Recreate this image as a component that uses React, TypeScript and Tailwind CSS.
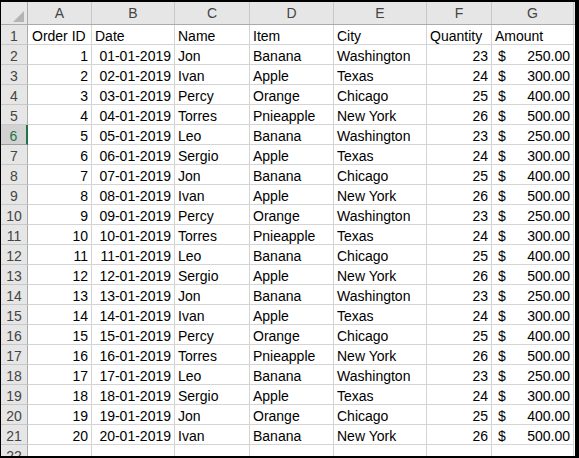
import React from 'react';

const cols = [
  { key: 'A', w: 'w-[64px]' },
  { key: 'B', w: 'w-[83px]' },
  { key: 'C', w: 'w-[75px]' },
  { key: 'D', w: 'w-[84px]' },
  { key: 'E', w: 'w-[93px]' },
  { key: 'F', w: 'w-[65px]' },
  { key: 'G', w: 'w-[82px]' },
];

const rows: [number, string, string, string, string, number, string][] = [
  [1, '01-01-2019', 'Jon', 'Banana', 'Washington', 23, '250.00'],
  [2, '02-01-2019', 'Ivan', 'Apple', 'Texas', 24, '300.00'],
  [3, '03-01-2019', 'Percy', 'Orange', 'Chicago', 25, '400.00'],
  [4, '04-01-2019', 'Torres', 'Pnieapple', 'New York', 26, '500.00'],
  [5, '05-01-2019', 'Leo', 'Banana', 'Washington', 23, '250.00'],
  [6, '06-01-2019', 'Sergio', 'Apple', 'Texas', 24, '300.00'],
  [7, '07-01-2019', 'Jon', 'Banana', 'Chicago', 25, '400.00'],
  [8, '08-01-2019', 'Ivan', 'Apple', 'New York', 26, '500.00'],
  [9, '09-01-2019', 'Percy', 'Orange', 'Washington', 23, '250.00'],
  [10, '10-01-2019', 'Torres', 'Pnieapple', 'Texas', 24, '300.00'],
  [11, '11-01-2019', 'Leo', 'Banana', 'Chicago', 25, '400.00'],
  [12, '12-01-2019', 'Sergio', 'Apple', 'New York', 26, '500.00'],
  [13, '13-01-2019', 'Jon', 'Banana', 'Washington', 23, '250.00'],
  [14, '14-01-2019', 'Ivan', 'Apple', 'Texas', 24, '300.00'],
  [15, '15-01-2019', 'Percy', 'Orange', 'Chicago', 25, '400.00'],
  [16, '16-01-2019', 'Torres', 'Pnieapple', 'New York', 26, '500.00'],
  [17, '17-01-2019', 'Leo', 'Banana', 'Washington', 23, '250.00'],
  [18, '18-01-2019', 'Sergio', 'Apple', 'Texas', 24, '300.00'],
  [19, '19-01-2019', 'Jon', 'Orange', 'Chicago', 25, '400.00'],
  [20, '20-01-2019', 'Ivan', 'Banana', 'New York', 26, '500.00'],
];

const cell = 'h-full shrink-0 border-r border-b border-[#d4d4d4] flex items-end pb-[1px] overflow-hidden whitespace-nowrap';

function RowHeader({ n, active }: { n: number; active?: boolean }) {
  return (
    <div
      className={
        'w-[27px] h-full shrink-0 flex items-end justify-center pb-[1px] border-b ' +
        (active
          ? 'bg-[#d2d2d2] text-[#217346] border-b-[#9f9f9f] border-r-2 border-r-[#217346]'
          : 'bg-[#e6e6e6] text-[#444] border-b-[#c8c8c8] border-r border-r-[#ababab]')
      }
    >
      {n}
    </div>
  );
}

export default function App() {
  return (
    <div className="w-[579px] h-[458px] bg-black pt-[2px] pl-[1px] pr-[4px] pb-[2px] overflow-hidden">
      <div
        className="w-full h-full bg-white overflow-hidden text-[14px] leading-none text-black"
        style={{ fontFamily: '"Liberation Sans", Arial, sans-serif' }}
      >
        {/* column headers */}
        <div className="flex h-[23px] bg-[#e6e6e6] border-b border-[#ababab]">
          <div className="w-[27px] h-full shrink-0 border-r border-[#ababab] relative">
            <svg width="11" height="11" className="absolute right-[3px] bottom-[2px]">
              <polygon points="11,0 11,11 0,11" fill="#b4b4b4" />
            </svg>
          </div>
          {cols.map((c) => (
            <div
              key={c.key}
              className={`${c.w} h-full shrink-0 border-r border-[#c8c8c8] flex items-center justify-center text-[#444]`}
            >
              {c.key}
            </div>
          ))}
        </div>

        {/* header row */}
        <div className="flex h-[20px]">
          <RowHeader n={1} />
          <div className={`${cols[0].w} ${cell} pl-[4px]`}>Order ID</div>
          <div className={`${cols[1].w} ${cell} pl-[3px]`}>Date</div>
          <div className={`${cols[2].w} ${cell} pl-[3px]`}>Name</div>
          <div className={`${cols[3].w} ${cell} pl-[3px]`}>Item</div>
          <div className={`${cols[4].w} ${cell} pl-[3px]`}>City</div>
          <div className={`${cols[5].w} ${cell} pl-[3px]`}>Quantity</div>
          <div className={`${cols[6].w} ${cell} pl-[3px]`}>Amount</div>
        </div>

        {rows.map((r, i) => (
          <div key={r[0]} className="flex h-[20px]">
            <RowHeader n={i + 2} active={i + 2 === 6} />
            <div className={`${cols[0].w} ${cell} justify-end pr-[3px]`}>{r[0]}</div>
            <div className={`${cols[1].w} ${cell} justify-end pr-[3px]`}>{r[1]}</div>
            <div className={`${cols[2].w} ${cell} pl-[3px]`}>{r[2]}</div>
            <div className={`${cols[3].w} ${cell} pl-[3px]`}>{r[3]}</div>
            <div className={`${cols[4].w} ${cell} pl-[3px]`}>{r[4]}</div>
            <div className={`${cols[5].w} ${cell} justify-end pr-[3px]`}>{r[5]}</div>
            <div className={`${cols[6].w} ${cell} justify-between pl-[6px] pr-[3px]`}>
              <span>$</span>
              <span>{r[6]}</span>
            </div>
          </div>
        ))}

        <div className="flex h-[20px]">
          <RowHeader n={22} />
          {cols.map((c) => (
            <div key={c.key} className={`${c.w} ${cell}`} />
          ))}
        </div>
      </div>
    </div>
  );
}
